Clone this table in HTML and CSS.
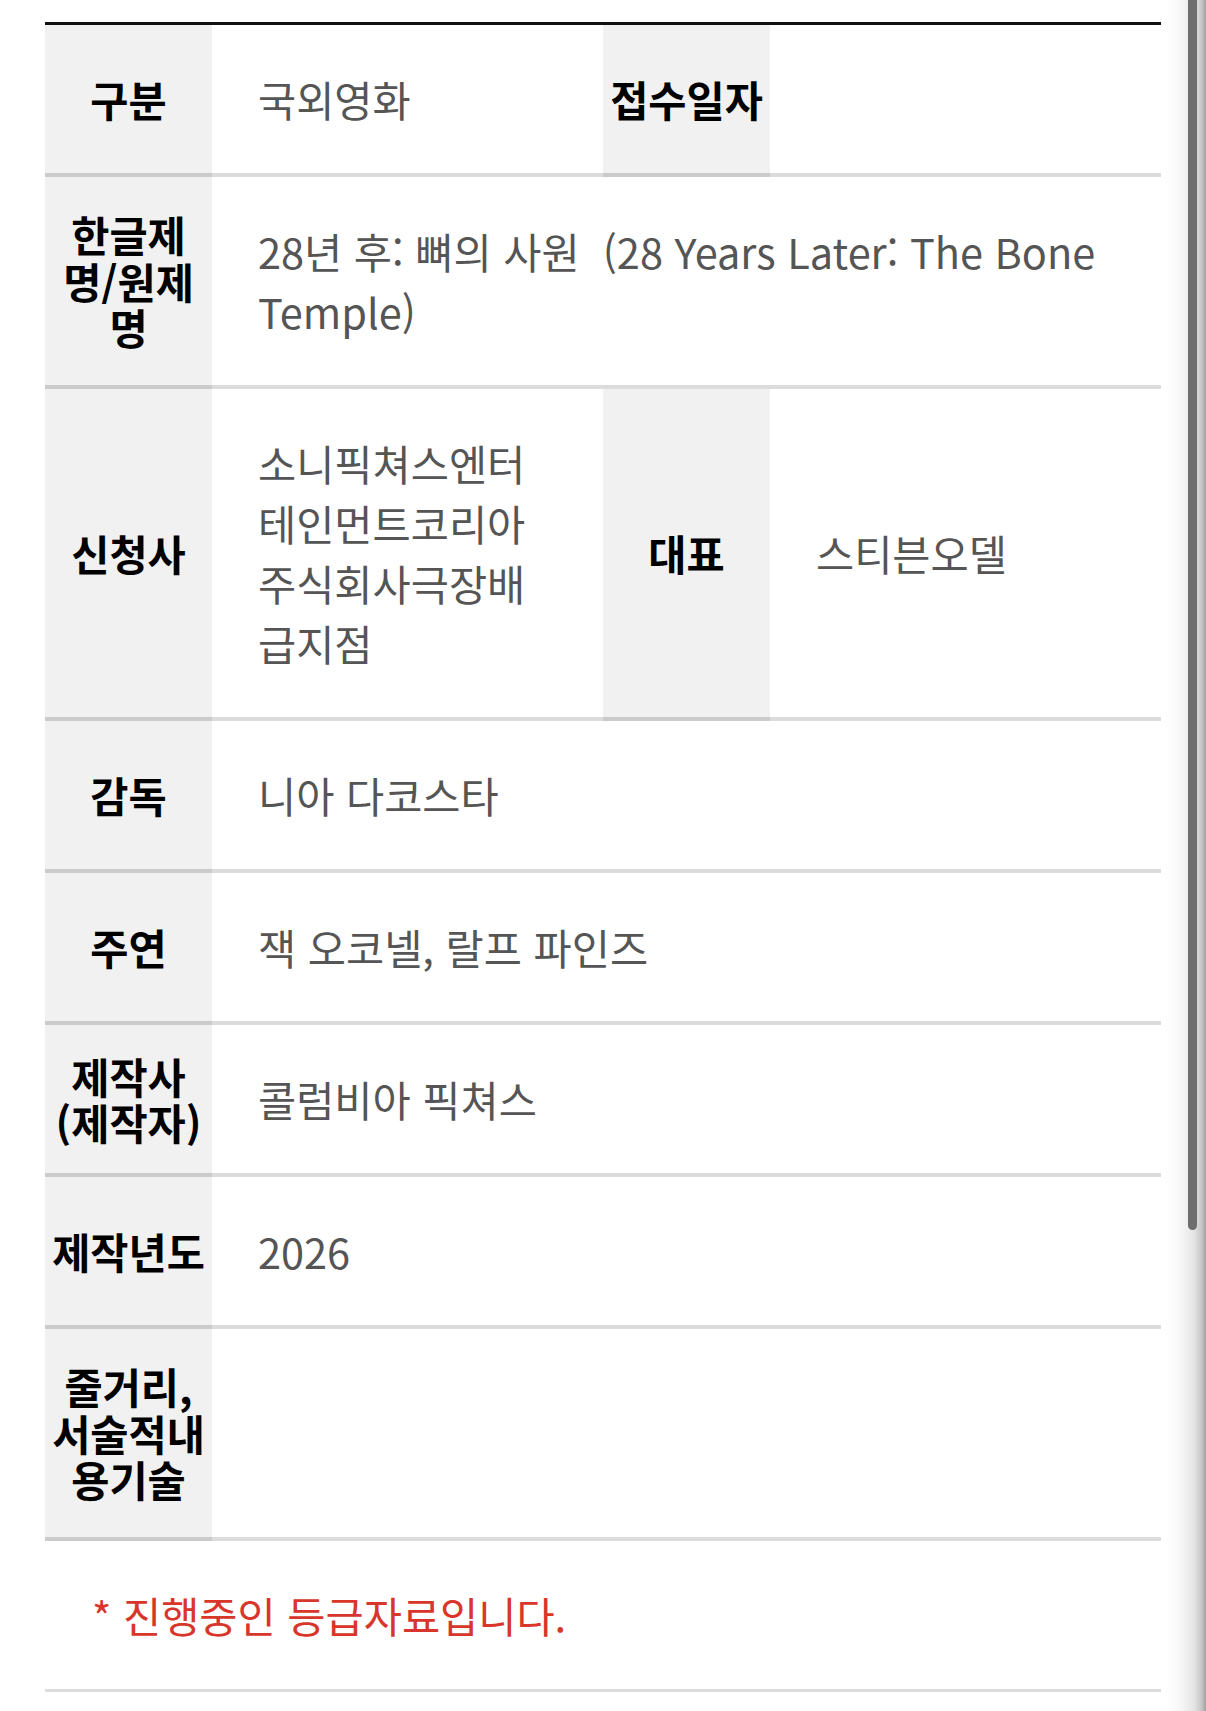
FILE: index.html
```html
<!DOCTYPE html>
<html lang="ko">
<head>
<meta charset="utf-8">
<title>등급분류 정보</title>
<link rel="stylesheet" href="styles.css">
</head>
<body>
<div class="page">
  <table class="info">
    <colgroup>
      <col class="c-th"><col class="c-td"><col class="c-th"><col class="c-td">
    </colgroup>
    <tbody>
      <tr>
        <th>구분</th>
        <td>국외영화</td>
        <th>접수일자</th>
        <td></td>
      </tr>
      <tr>
        <th>한글제명/원제명</th>
        <td colspan="3">28년 후: 뼈의 사원&nbsp; (28 Years Later: The Bone Temple)</td>
      </tr>
      <tr>
        <th>신청사</th>
        <td>소니픽쳐스엔터테인먼트코리아주식회사극장배급지점</td>
        <th>대표</th>
        <td>스티븐오델</td>
      </tr>
      <tr>
        <th>감독</th>
        <td colspan="3">니아 다코스타</td>
      </tr>
      <tr>
        <th>주연</th>
        <td colspan="3">잭 오코넬, 랄프 파인즈</td>
      </tr>
      <tr>
        <th>제작사<br>(제작자)</th>
        <td colspan="3">콜럼비아 픽쳐스</td>
      </tr>
      <tr>
        <th>제작년도</th>
        <td colspan="3">2026</td>
      </tr>
      <tr class="tall">
        <th>줄거리, 서술적내용기술</th>
        <td colspan="3"></td>
      </tr>
    </tbody>
  </table>
  <p class="note">* 진행중인 등급자료입니다.</p>
</div>
<div class="scroll-shade"><div class="scroll-thumb"></div></div>
</body>
</html>
```
FILE: styles.css
```css
html, body {
  margin: 0;
  padding: 0;
  background: #fff;
}

body {
  font-family: "Noto Sans CJK KR", "Noto Sans", sans-serif;
  overflow: hidden;
}

.page {
  width: 1116px;
  padding: 22px 0 0 45px;
}

.info {
  width: 1116px;
  table-layout: fixed;
  border-collapse: separate;
  border-spacing: 0;
  border-top: 3px solid #111;
}

.c-th { width: 167px; }
.c-td { width: 391px; }

.info th {
  background: #f1f1f1;
  color: #000;
  font-weight: 700;
  font-size: 41.5px;
  line-height: 46.5px;
  padding: 20px 4px;
  text-align: center;
  vertical-align: middle;
  border-bottom: 4px solid #cbcbcb;
}

.info td {
  color: #555;
  font-weight: 400;
  font-size: 41.5px;
  line-height: 60px;
  padding: 44px 46px;
  text-align: left;
  vertical-align: middle;
  border-bottom: 4px solid #dcdcdc;
}

.info tr.tall td {
  height: 120px;
}

.note {
  margin: 0;
  height: 148px;
  display: flex;
  align-items: center;
  padding-left: 47px;
  color: #d9362b;
  font-size: 41.5px;
  border-bottom: 3px solid #dcdcdc;
}

.scroll-shade {
  position: fixed;
  top: 0;
  right: 0;
  width: 40px;
  height: 100%;
  background: linear-gradient(to right, rgba(255,255,255,0) 0%, #f6f6f6 40%, #e4e4e4 70%, #c8c8c8 88%, #a2a2a2 100%);
}

.scroll-thumb {
  position: absolute;
  top: -6px;
  left: 22px;
  width: 9px;
  height: 1236px;
  border-radius: 5px;
  background: #6e6e6e;
}
```
